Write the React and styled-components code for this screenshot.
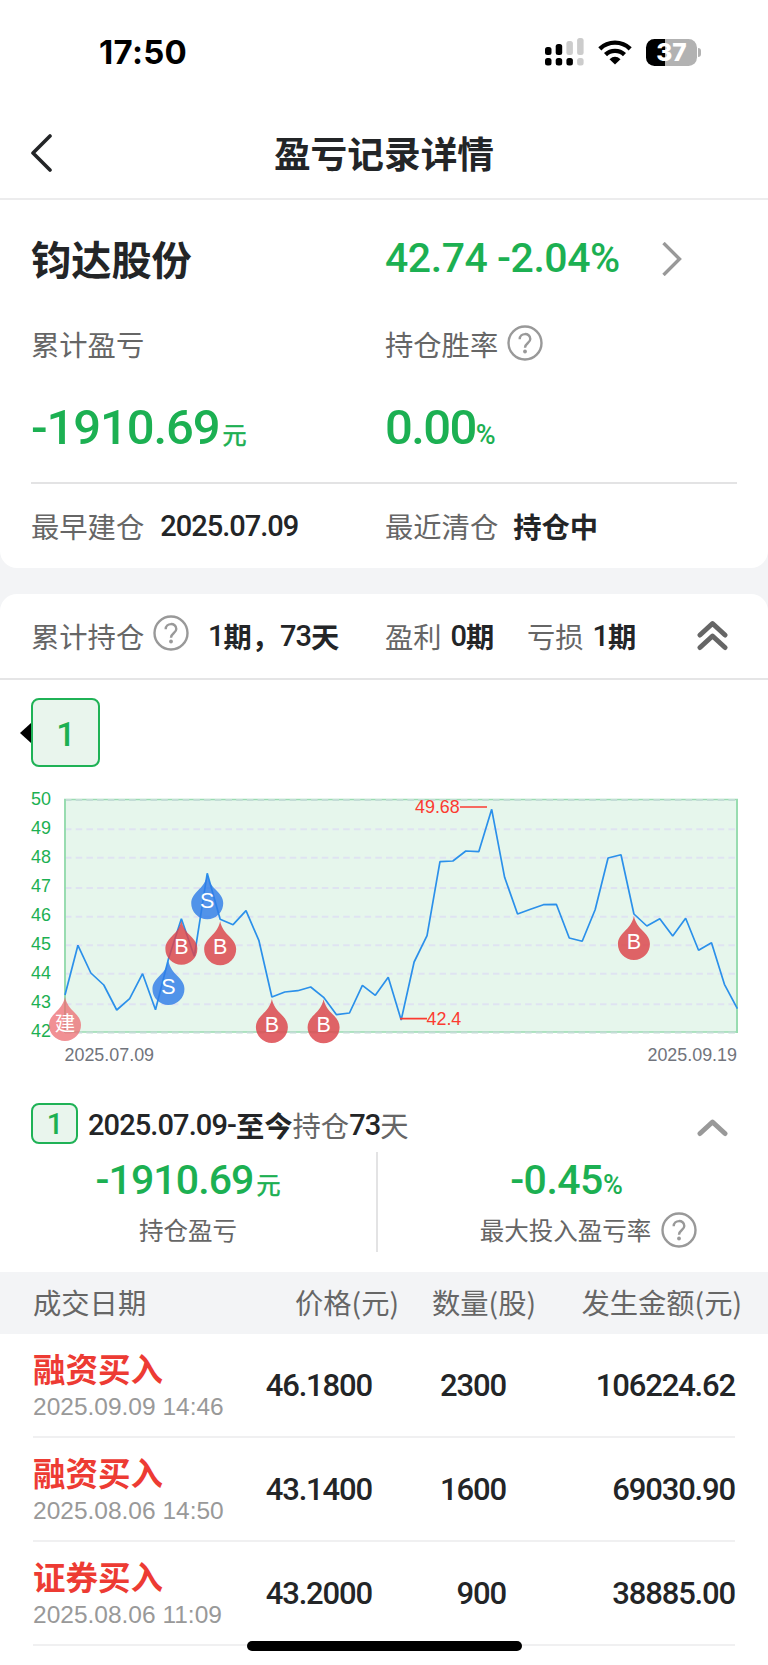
import React from "react";
import styled, { createGlobalStyle } from "styled-components";

const GlobalStyle = createGlobalStyle`
  * {
    box-sizing: border-box;
  }
  body {
    margin: 0;
    background: #f3f4f6;
    color: #232527;
    font-family: "Noto Sans CJK SC", sans-serif;
    font-size: 28px;
    line-height: 1;
    white-space: nowrap;
  }
  svg {
    display: block;
    flex: none;
  }
`;

const Page = styled.div`
  position: relative;
  width: 768px;
  height: 1665px;
  overflow: hidden;
`;
const StatusBar = styled.div`
  display: flex;
  align-items: center;
  height: 106px;
  padding: 0 67px 1px 99px;
  background: #fff;
`;
const Clock = styled.div`
  flex: 1;
  color: #000;
  font-family: Inter, sans-serif;
  font-size: 33px;
  font-weight: 700;
  letter-spacing: 0.3px;
`;
const StatusIcons = styled.div`
  display: flex;
  align-items: center;
  gap: 14px;
  padding-bottom: 1px;
`;
const Header = styled.header`
  display: grid;
  grid-template-columns: 80px 1fr 80px;
  align-items: center;
  height: 94px;
  border-bottom: 2px solid #ececed;
  background: #fff;
`;
const BackButton = styled.button`
  display: flex;
  padding: 2px 0 0 30px;
  border: none;
  background: transparent;
`;
const Title = styled.h1`
  margin: 0;
  font-size: 36.7px;
  font-weight: 700;
  text-align: center;
`;
const Card = styled.section`
  border-radius: ${(props) => props.$radius};
  background: #fff;
`;
const SummaryCard = styled(Card)`
  height: 368px;
  margin-bottom: 26px;
  padding: 0 31px;
`;
const HoldingCard = styled(Card)`
  min-height: 1071px;
`;
const SummaryRow = styled.div`
  display: grid;
  grid-template-columns: 354px 1fr;
  align-items: center;
  height: ${(props) => props.$height}px;
  border-bottom: ${(props) => (props.$line ? "2px solid #e3e3e4" : "none")};
`;
const Inline = styled.div`
  display: flex;
  align-items: center;
  gap: ${(props) => props.$gap || 0}px;
`;
const StockName = styled.h2`
  margin: 0;
  font-size: 40.2px;
  font-weight: 700;
`;
const Label = styled.span`
  color: #666;
  font-size: ${(props) => props.$size || 28.3}px;
`;
const Strong = styled.b`
  font-size: 28.3px;
  font-weight: 700;
`;
const Num = styled.span`
  color: ${(props) => (props.$green ? "#1cb052" : "inherit")};
  font-family: Roboto, sans-serif;
  font-size: ${(props) => props.$size || 29}px;
  font-weight: 500;
  letter-spacing: ${(props) => props.$spacing ?? -1}px;
`;
const Amount = styled.div`
  display: flex;
  align-items: baseline;
  color: #1cb052;
`;
const Unit = styled.span`
  margin-left: 3px;
  font-size: 24px;
  -webkit-text-stroke: 0.6px;
`;
const PeriodBar = styled.div`
  display: flex;
  align-items: center;
  height: 86px;
  padding: 0 31px;
  border-bottom: 2px solid #e5e5e6;
`;
const Stat = styled.div`
  display: flex;
  align-items: center;
  gap: ${(props) => props.$gap}px;
  width: ${(props) => props.$width}px;
`;
const Toggle = styled.div`
  margin-left: auto;
  padding: ${(props) => props.$top || 0}px 9px ${(props) => props.$bottom || 0}px 0;
`;
const Periods = styled.div`
  display: flex;
  align-items: center;
  height: 105px;
  padding: 0 20px;
`;
const Arrow = styled.div`
  border: 10px solid transparent;
  border-left: none;
  border-right: 11px solid #000;
`;
const PeriodTag = styled.div`
  display: flex;
  align-items: center;
  justify-content: center;
  width: ${(props) => props.$width}px;
  height: ${(props) => props.$height}px;
  padding-top: 2px;
  border: 2px solid #1fb256;
  border-radius: 8px;
  background: #e9f5ed;
`;
const Detail = styled.div`
  display: flex;
  align-items: center;
  height: 60px;
  padding: 3px 31px 0;
`;
const DetailText = styled.div`
  display: flex;
  align-items: center;
  margin-left: 10px;
  padding-top: 3px;
`;
const Results = styled.div`
  display: grid;
  grid-template-columns: 376px 1fr;
  height: 100px;
  margin-bottom: 20px;
`;
const Result = styled.div`
  display: flex;
  flex-direction: column;
  align-items: center;
  padding-top: 8px;
  border-left: ${(props) => (props.$line ? "2px solid #e3e3e4" : "none")};
  padding-right: ${(props) => props.$right || 0}px;
`;
const ResultLabel = styled.div`
  display: flex;
  align-items: center;
  gap: 10px;
  height: 36px;
  margin-top: 11px;
  margin-left: ${(props) => props.$shift || 0}px;
`;
const TableHead = styled.div`
  display: grid;
  grid-template-columns: 130px 236px 137px 206px;
  align-items: center;
  height: 62px;
  padding: 0 0 2px 33px;
  background: #f3f4f6;

  & > :not(:first-child) {
    text-align: right;
  }
`;
const Trades = styled.div`
  padding: 0 33px;
`;
const Trade = styled.div`
  display: grid;
  grid-template-columns: 220px 119px 134px 1fr;
  height: 104px;
  border-bottom: 2px solid #f0f0f1;
  line-height: 103px;

  & > :not(:first-child) {
    text-align: right;
  }
`;
const TradeInfo = styled.div`
  display: flex;
  flex-direction: column;
  gap: 10px;
  padding-top: 18px;
  line-height: 1;
`;
const TradeType = styled.div`
  color: #ed3b33;
  font-size: 32.5px;
  font-weight: 700;
`;
const TradeTime = styled.div`
  color: #999;
  font-family: "Liberation Sans", sans-serif;
  font-size: 24.5px;
`;
const HomeIndicator = styled.div`
  position: absolute;
  left: 247px;
  bottom: 14px;
  width: 275px;
  height: 10px;
  border-radius: 5px;
  background: #000;
`;

const PRICES_Y = [
  995, 945.3, 973, 985, 1010, 998.7, 973.7, 1009.7, 959, 918.7, 956.3, 873.3,
  919.3, 924.7, 910.7, 940.7, 997, 992, 990.7, 987, 997.3, 1014.7, 1013, 985.3,
  995.3, 977.3, 1020, 962, 935.7, 861.7, 861, 851, 851.7, 809.3, 877.3, 914,
  909.3, 904.7, 904.3, 938, 941.3, 909.7, 858, 854.7, 914, 926, 918.7, 936,
  918.3, 950.3, 942.7, 984.3, 1008.7,
];
const CHART_TOP = 785;
const pointX = (i) => 65 + i * 12.93;
const pointY = (i) => PRICES_Y[i] - CHART_TOP;

const GRID = [
  [50, 799.5],
  [49, 828.7],
  [48, 857.3],
  [47, 887.5],
  [46, 916.2],
  [45, 944.7],
  [44, 973.3],
  [43, 1003.7],
  [42, 1032],
];
const MARKERS = [
  { at: 0, text: "建", color: "#ec6b70", opacity: 0.75 },
  { at: 8, text: "S", color: "#2f7de8", opacity: 0.82 },
  { at: 9, text: "B", color: "#dc444a", opacity: 0.83 },
  { at: 11, text: "S", color: "#2f7de8", opacity: 0.82 },
  { at: 12, text: "B", color: "#dc444a", opacity: 0.83 },
  { at: 16, text: "B", color: "#dc444a", opacity: 0.83 },
  { at: 20, text: "B", color: "#dc444a", opacity: 0.83 },
  { at: 44, text: "B", color: "#dc444a", opacity: 0.83 },
];
const TRADES = [
  ["融资买入", "2025.09.09 14:46", "46.1800", "2300", "106224.62"],
  ["融资买入", "2025.08.06 14:50", "43.1400", "1600", "69030.90"],
  ["证券买入", "2025.08.06 11:09", "43.2000", "900", "38885.00"],
];

const ChartText = styled.text`
  font-family: "Liberation Sans", "Noto Sans CJK SC", sans-serif;
  font-size: ${(props) => props.$size || 17.9}px;
`;

function Marker({ at, text, color, opacity }) {
  return (
    <g transform={`translate(${pointX(at)} ${pointY(at)})`}>
      <path
        d="M0 2C1.5 9 5 13 9.5 17.5C13.5 21.5 16 25 16 30A16 16 0 0 1-16 30C-16 25-13.5 21.5-9.5 17.5C-5 13-1.5 9 0 2Z"
        fill={color}
        opacity={opacity}
      />
      <ChartText
        $size={text === "建" ? 20.5 : 21.5}
        y={text === "建" ? 36 : 35.2}
        fill="#fff"
        textAnchor="middle"
      >
        {text}
      </ChartText>
    </g>
  );
}

function PriceChart() {
  const line = PRICES_Y.map((_, i) => `${pointX(i)},${pointY(i)}`).join(" ");
  return (
    <svg width="768" height="307" viewBox="0 0 768 307">
      <rect x="65" y="14" width="672" height="233" fill="#e6f6ec" />
      <path d="M64 14.5H738M64 247H738" stroke="#98dcb0" strokeWidth="1.5" />
      {GRID.map(([value, y]) => (
        <g key={value}>
          <line
            x1="65"
            x2="737"
            y1={y - CHART_TOP + 0.5}
            y2={y - CHART_TOP + 0.5}
            stroke={value === 50 || value === 42 ? "#c3dcd6" : "#dfe3f1"}
            strokeWidth="2"
            strokeDasharray="6.5 4.2"
          />
          <ChartText x="31" y={20 + (50 - value) * 29.05} fill="#1cb052">
            {value}
          </ChartText>
        </g>
      ))}
      <path d="M65 14V247M737 14V248" stroke="#98dcb0" strokeWidth="2" />
      <polyline
        points={line}
        fill="none"
        stroke="#2b90ea"
        strokeWidth="1.7"
        strokeLinejoin="bevel"
      />
      {MARKERS.map((marker) => (
        <Marker key={marker.at} {...marker} />
      ))}
      <path d="M460 22H487M400 233.6H427" stroke="#fb3b30" strokeWidth="1.7" />
      <ChartText x="415" y="28.3" fill="#fb3b30">
        49.68
      </ChartText>
      <ChartText x="426.5" y="239.5" fill="#fb3b30">
        42.4
      </ChartText>
      <ChartText x="64.5" y="276" fill="#71747c">
        2025.07.09
      </ChartText>
      <ChartText x="737" y="276" fill="#71747c" textAnchor="end">
        2025.09.19
      </ChartText>
    </svg>
  );
}

const HelpSvg = styled.svg`
  margin-bottom: ${(props) => props.$lift || 0}px;
`;

function HelpIcon({ lift }) {
  return (
    <HelpSvg
      $lift={lift}
      width="36"
      height="36"
      fill="none"
      stroke="#999"
      strokeWidth="2.4"
    >
      <circle cx="18" cy="18" r="16.5" />
      <path d="M12.7 14.2C12.7 7.4 23.3 7.4 23.3 14C23.3 18 18 18 18 22.8" />
      <circle cx="18" cy="26.5" r="1.9" fill="#999" stroke="none" />
    </HelpSvg>
  );
}

function SignalIcon() {
  return (
    <svg width="39" height="28">
      <g fill="#000">
        <rect x="0" y="9" width="6.5" height="8" rx="2.5" />
        <rect x="10.7" y="6" width="6.5" height="11" rx="2.5" />
        <rect x="0" y="20" width="6.5" height="7.5" rx="2.5" />
        <rect x="10.7" y="20" width="6.5" height="7.5" rx="2.5" />
        <rect x="21.4" y="20" width="6.5" height="7.5" rx="2.5" />
      </g>
      <g fill="#ccc">
        <rect x="21.4" y="3" width="6.5" height="14" rx="2.5" />
        <rect x="32.1" y="0" width="6.5" height="17" rx="2.5" />
        <rect x="32.1" y="20" width="6.5" height="7.5" rx="2.5" />
      </g>
    </svg>
  );
}

function WifiIcon() {
  return (
    <svg width="34" height="25" viewBox="0 0 34 25">
      <path
        d="M1.8 8.8C10.3.6 23.7.6 32.2 8.8M7.5 14.6C12.8 9.6 21.2 9.6 26.5 14.6"
        fill="none"
        stroke="#000"
        strokeWidth="4.4"
      />
      <path d="M17 24.5L11.5 19.2Q17 14.5 22.5 19.2Z" />
    </svg>
  );
}

const Battery = styled.div`
  display: flex;
  align-items: center;
  gap: 1px;
`;
const BatteryBody = styled.div`
  width: 51px;
  height: 27px;
  border-radius: 8.5px;
  background: linear-gradient(90deg, #000 19px, #b2b2b2 19px);
  color: #fff;
  font-family: Inter, sans-serif;
  font-size: 24.5px;
  font-weight: 800;
  line-height: 27px;
  text-align: center;
`;
const BatteryTip = styled.div`
  width: 3px;
  height: 9px;
  border-radius: 0 4px 4px 0;
  background: #b2b2b2;
`;

export default function App() {
  return (
    <Page>
      <GlobalStyle />
      <StatusBar>
        <Clock>17:50</Clock>
        <StatusIcons>
          <SignalIcon />
          <WifiIcon />
          <Battery>
            <BatteryBody>37</BatteryBody>
            <BatteryTip />
          </Battery>
        </StatusIcons>
      </StatusBar>
      <Header>
        <BackButton>
          <svg width="22" height="38" fill="none" stroke="#232527">
            <path
              d="M20 2L3 19L20 36"
              strokeWidth="3.6"
              strokeLinecap="round"
              strokeLinejoin="round"
            />
          </svg>
        </BackButton>
        <Title>盈亏记录详情</Title>
      </Header>

      <SummaryCard $radius="0 0 17px 17px">
        <SummaryRow $height={117}>
          <StockName>钧达股份</StockName>
          <Inline $gap={42}>
            <Num $green $size={41} $spacing={-0.45}>
              42.74 -2.04%
            </Num>
            <svg width="20" height="34" fill="none" stroke="#999">
              <path d="M1.5 1L17.5 17L1.5 33" strokeWidth="3.4" />
            </svg>
          </Inline>
        </SummaryRow>
        <SummaryRow $height={55}>
          <Label>累计盈亏</Label>
          <Inline $gap={9}>
            <Label>持仓胜率</Label>
            <HelpIcon lift={4} />
          </Inline>
        </SummaryRow>
        <SummaryRow $height={112} $line>
          <Amount>
            <Num $green $size={49} $spacing={-1.1}>
              -1910.69
            </Num>
            <Unit>元</Unit>
          </Amount>
          <Amount>
            <Num $green $size={49} $spacing={-1.6}>
              0.00
            </Num>
            <Num $size={27}>%</Num>
          </Amount>
        </SummaryRow>
        <SummaryRow $height={84}>
          <Inline $gap={16}>
            <Label>最早建仓</Label>
            <Num>2025.07.09</Num>
          </Inline>
          <Inline $gap={15}>
            <Label>最近清仓</Label>
            <Strong>持仓中</Strong>
          </Inline>
        </SummaryRow>
      </SummaryCard>

      <HoldingCard $radius="17px 17px 0 0">
        <PeriodBar>
          <Stat $gap={9} $width={177}>
            <Label>累计持仓</Label>
            <HelpIcon lift={6} />
          </Stat>
          <Stat $gap={0} $width={177}>
            <Num>1</Num>
            <Strong>期，</Strong>
            <Num>73</Num>
            <Strong>天</Strong>
          </Stat>
          <Stat $gap={9} $width={142}>
            <Label>盈利</Label>
            <Inline>
              <Num>0</Num>
              <Strong>期</Strong>
            </Inline>
          </Stat>
          <Stat $gap={9} $width={120}>
            <Label>亏损</Label>
            <Inline>
              <Num>1</Num>
              <Strong>期</Strong>
            </Inline>
          </Stat>
          <Toggle $bottom={2}>
            <svg width="31" height="31" fill="none" stroke="#666">
              <path
                d="M3 15L15.5 3.5L28 15M3 27.5L15.5 16L28 27.5"
                strokeWidth="5"
                strokeLinecap="round"
                strokeLinejoin="round"
              />
            </svg>
          </Toggle>
        </PeriodBar>

        <Periods>
          <Arrow />
          <PeriodTag $width={69} $height={69}>
            <Num $green $size={34}>
              1
            </Num>
          </PeriodTag>
        </Periods>
        <PriceChart />

        <Detail>
          <PeriodTag $width={47} $height={41}>
            <Num $green>1</Num>
          </PeriodTag>
          <DetailText>
            <Num $spacing={-0.9}>2025.07.09-</Num>
            <Strong>至今</Strong>
            <Label>持仓</Label>
            <Num>73</Num>
            <Label>天</Label>
          </DetailText>
          <Toggle $top={8}>
            <svg width="31" height="20" fill="none" stroke="#999">
              <path
                d="M3 15.5L15.5 4L28 15.5"
                strokeWidth="5"
                strokeLinecap="round"
                strokeLinejoin="round"
              />
            </svg>
          </Toggle>
        </Detail>
        <Results>
          <Result>
            <Amount>
              <Num $green $size={41} $spacing={-0.9}>
                -1910.69
              </Num>
              <Unit>元</Unit>
            </Amount>
            <ResultLabel>
              <Label $size={24.5}>持仓盈亏</Label>
            </ResultLabel>
          </Result>
          <Result $line $right={14}>
            <Amount>
              <Num $green $size={41} $spacing={-0.5}>
                -0.45
              </Num>
              <Num $size={27}>%</Num>
            </Amount>
            <ResultLabel $shift={45}>
              <Label $size={24.5}>最大投入盈亏率</Label>
              <HelpIcon />
            </ResultLabel>
          </Result>
        </Results>

        <TableHead>
          <Label>成交日期</Label>
          <Label>价格(元)</Label>
          <Label>数量(股)</Label>
          <Label>发生金额(元)</Label>
        </TableHead>
        <Trades>
          {TRADES.map(([type, time, price, count, total]) => (
            <Trade key={time}>
              <TradeInfo>
                <TradeType>{type}</TradeType>
                <TradeTime>{time}</TradeTime>
              </TradeInfo>
              <Num $size={31} $spacing={-1.15}>
                {price}
              </Num>
              <Num $size={31} $spacing={-1.15}>
                {count}
              </Num>
              <Num $size={31} $spacing={-1.15}>
                {total}
              </Num>
            </Trade>
          ))}
        </Trades>
      </HoldingCard>
      <HomeIndicator />
    </Page>
  );
}
